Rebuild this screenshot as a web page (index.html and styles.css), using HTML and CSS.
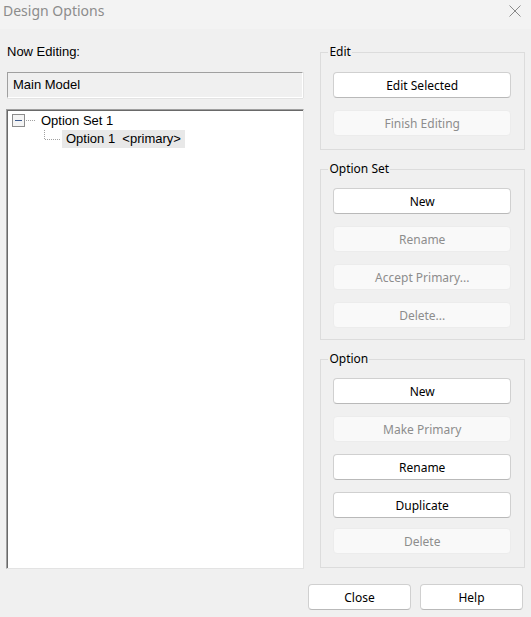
FILE: index.html
```html
<!DOCTYPE html>
<html lang="en">
<head>
<meta charset="UTF-8">
<meta name="viewport" content="width=device-width, initial-scale=1.0">
<title>Design Options</title>
<link rel="stylesheet" href="styles.css">
</head>
<body>
<div class="dialog">
  <div class="titlebar">
    <span class="title">Design Options</span>
    <svg class="close-x" width="12" height="12" viewBox="0 0 12 12">
      <path d="M0.5 0.5 L11.5 11.5 M11.5 0.5 L0.5 11.5" stroke="#8a8a8a" stroke-width="1" fill="none"/>
    </svg>
  </div>

  <div class="main">
    <div class="left-col">
      <div class="field-label">Now Editing:</div>
      <div class="readonly-box">Main Model</div>
      <div class="tree">
        <div class="tree-row">
          <svg class="tree-lines" width="28" height="18" viewBox="0 0 28 18">
            <rect x="0.5" y="2.5" width="12" height="12" fill="#f4f4f4" stroke="#8c8c8c"/>
            <line x1="3" y1="8.5" x2="10" y2="8.5" stroke="#3d5b8f"/>
            <line x1="14" y1="8.5" x2="23" y2="8.5" stroke="#a0a0a0" stroke-dasharray="1 1"/>
          </svg>
          <span class="tree-text">Option Set 1</span>
        </div>
        <div class="tree-row">
          <svg class="tree-lines" width="50" height="18" viewBox="0 0 50 18">
            <line x1="32.5" y1="0" x2="32.5" y2="9" stroke="#a0a0a0" stroke-dasharray="1 1"/>
            <line x1="33" y1="9.5" x2="49" y2="9.5" stroke="#a0a0a0" stroke-dasharray="1 1"/>
          </svg>
          <span class="tree-text selected">Option 1&nbsp; &lt;primary&gt;</span>
        </div>
      </div>
    </div>

    <div class="right-col">
      <fieldset class="group group-edit">
        <legend>Edit</legend>
        <button class="btn">Edit Selected</button>
        <button class="btn" disabled>Finish Editing</button>
      </fieldset>

      <fieldset class="group group-set">
        <legend>Option Set</legend>
        <button class="btn">New</button>
        <button class="btn" disabled>Rename</button>
        <button class="btn" disabled>Accept Primary...</button>
        <button class="btn" disabled>Delete...</button>
      </fieldset>

      <fieldset class="group group-option">
        <legend>Option</legend>
        <button class="btn">New</button>
        <button class="btn" disabled>Make Primary</button>
        <button class="btn">Rename</button>
        <button class="btn">Duplicate</button>
        <button class="btn last" disabled>Delete</button>
      </fieldset>
    </div>
  </div>

  <div class="footer">
    <button class="btn footer-btn">Close</button>
    <button class="btn footer-btn">Help</button>
  </div>
</div>
</body>
</html>
```

FILE: styles.css
```css
body {
  margin: 0;
  padding: 0;
  background-color: #f0f0f0;
  font-family: "Noto Sans", "Open Sans", sans-serif;
  font-size: 12px;
  color: #000;
}

.dialog {
  width: 531px;
  height: 617px;
  overflow: hidden;
}

.titlebar {
  height: 29px;
  background-color: #f3f3f3;
  display: flex;
  align-items: flex-start;
  justify-content: space-between;
  padding: 0 10px 0 3px;
  box-sizing: border-box;
}

.title {
  font-size: 14px;
  line-height: 22px;
  color: #8c8c8c;
}

.close-x {
  margin-top: 5px;
}

.main {
  display: flex;
  padding: 15px 6px 0 6px;
  gap: 16px;
}

.left-col {
  width: 299px;
  display: flex;
  flex-direction: column;
}

.field-label {
  font-family: "Liberation Sans", Arial, sans-serif;
  font-size: 13px;
  line-height: 16px;
  padding-left: 1px;
}

.readonly-box {
  margin: 12px 1px 0 1px;
  height: 26px;
  box-sizing: border-box;
  border: 1px solid #fff;
  border-top-color: #a0a0a0;
  border-left-color: #a0a0a0;
  box-shadow: 0 1px 0 #e3e3e3, 1px 0 0 #e3e3e3;
  padding-left: 5px;
  font-family: "Liberation Sans", Arial, sans-serif;
  font-size: 13px;
  line-height: 24px;
}

.tree {
  margin-top: 11px;
  height: 460px;
  box-sizing: border-box;
  background-color: #fff;
  border: 1px solid #e3e3e3;
  border-top-color: #a0a0a0;
  border-left-color: #a0a0a0;
  box-shadow: inset 1px 1px 0 #696969;
  padding: 2px 0 0 5px;
}

.tree-row {
  display: flex;
  align-items: center;
  height: 18px;
}

.tree-lines {
  flex-shrink: 0;
}

.tree-text {
  font-family: "Liberation Sans", Arial, sans-serif;
  font-size: 13px;
  line-height: 18px;
  padding: 0 1px;
  white-space: nowrap;
}

.tree-text.selected {
  background-color: #e8e8e8;
  padding: 0 4px 0 4px;
}

.right-col {
  width: 205px;
  display: flex;
  flex-direction: column;
  gap: 11px;
}

.group {
  margin: 0;
  padding: 11px 13px 13px 12px;
  border: 1px solid #dcdcdc;
  display: flex;
  flex-direction: column;
  gap: 12px;
  min-width: 0;
}

.group-edit {
  padding-top: 12px;
}

.group-set {
  padding-bottom: 11px;
}

.group legend {
  margin-left: -5px;
  padding: 0 1px;
  font-size: 12px;
  line-height: 16px;
}

.btn {
  height: 26px;
  box-sizing: border-box;
  background-color: #fff;
  border: 1px solid #d0d0d0;
  border-bottom-color: #b9b9b9;
  border-radius: 4px;
  font-family: "Noto Sans", "Open Sans", sans-serif;
  font-size: 12px;
  color: #000;
  padding: 0;
}

.btn:disabled {
  background-color: #f9f9f9;
  border-color: #ececec;
  color: #8d8d8d;
}

.btn.last {
  margin-top: -2px;
}

.footer {
  display: flex;
  justify-content: flex-end;
  gap: 9px;
  padding: 15px 8px 0 0;
}

.footer-btn {
  width: 103px;
}
```
